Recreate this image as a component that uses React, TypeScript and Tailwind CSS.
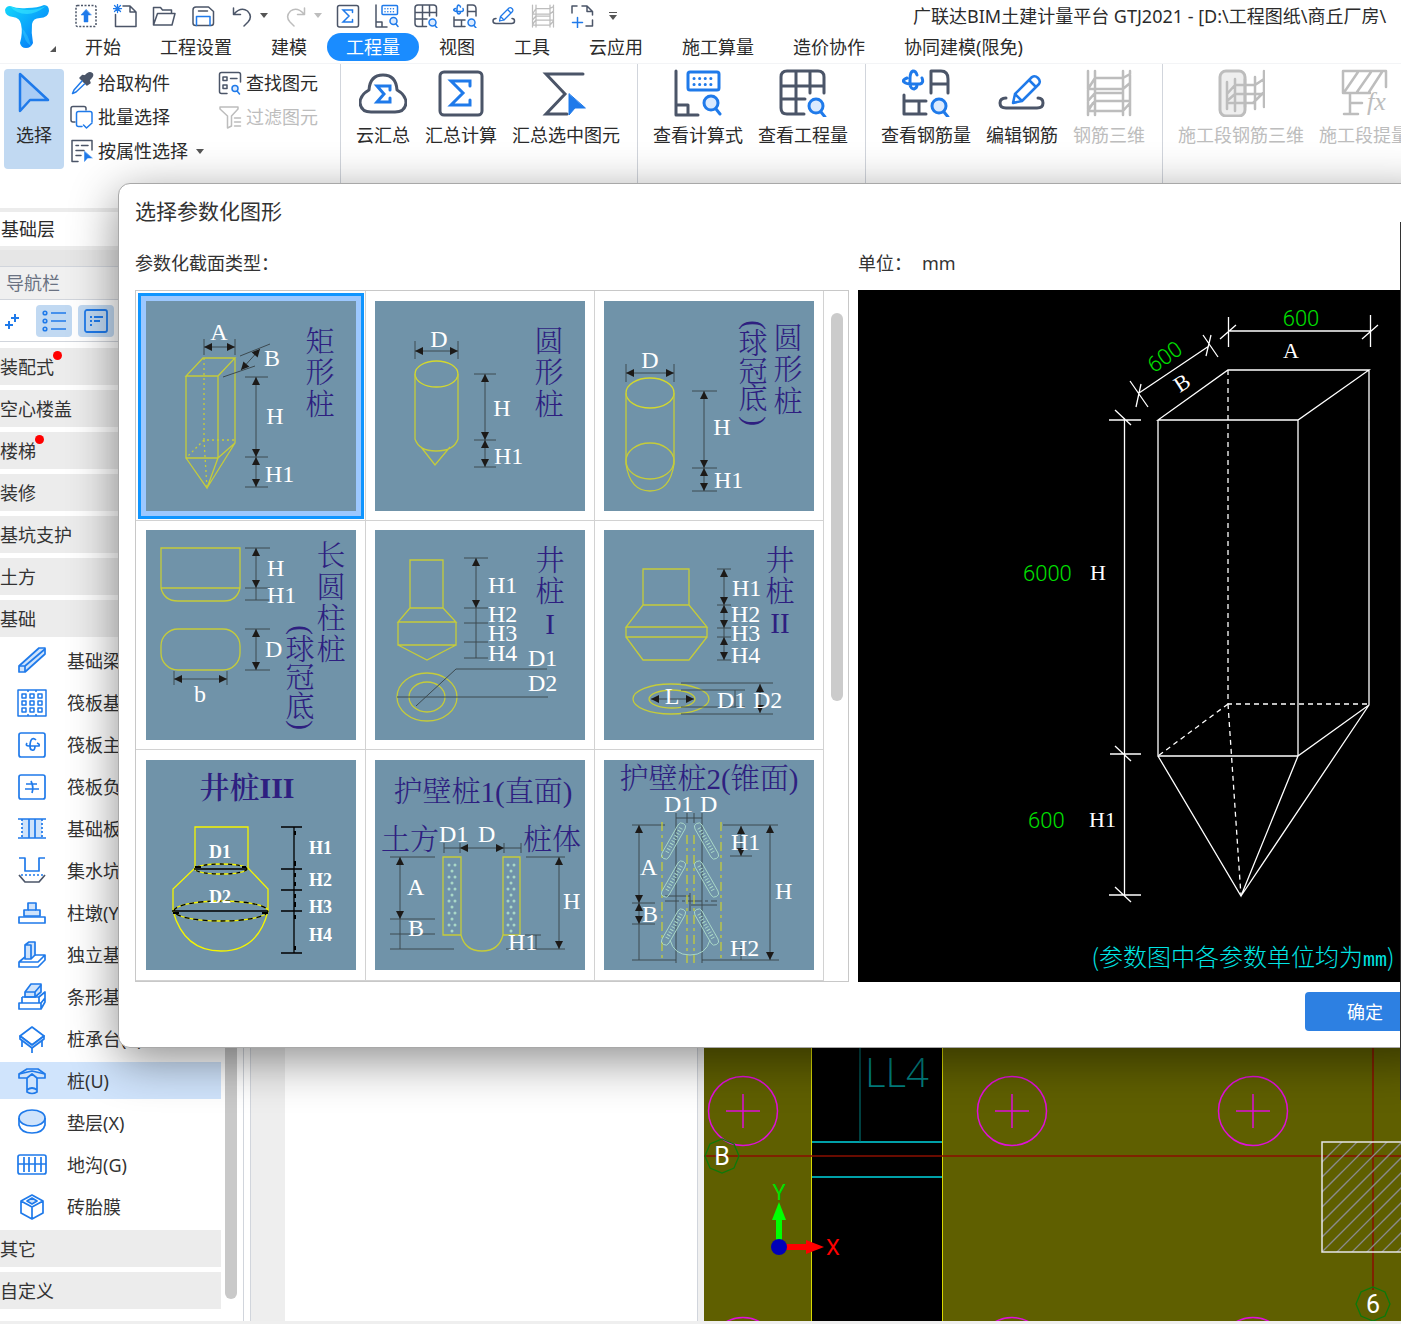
import React, { useState } from 'react';

const DARK = '#4b5568';
const BLUE = '#1f7aea';
const GRAY = '#bdbdbd';

type IconProps = { size?: string };

const Svg: React.FC<IconProps & { children: React.ReactNode }> = ({ size = 'size-6', children }) => (
  <svg viewBox="0 0 48 48" className={`${size} shrink-0`} fill="none" stroke={DARK} strokeWidth="3" strokeLinecap="round" strokeLinejoin="round">
    {children}
  </svg>
);

const Lens: React.FC<{ x?: number; y?: number; r?: number }> = ({ x = 37, y = 36, r = 7 }) => (
  <g stroke={BLUE}>
    <circle cx={x} cy={y} r={r} fill="#dbeafe" />
    <path d={`M${x + 5} ${y + 6} L${x + 9} ${y + 11}`} />
  </g>
);

/* ---------- toolbar icons ---------- */

const UploadIcon = () => (
  <Svg>
    <rect x="4" y="3" width="40" height="42" rx="3" strokeDasharray="4 3" strokeWidth="3" strokeLinecap="butt" />
    <path d="M24 11 L14 22 H20 V36 H28 V22 H34 Z" fill={BLUE} stroke={BLUE} strokeWidth="1" />
  </Svg>
);

const NewIcon = () => (
  <Svg>
    <path d="M20 4 H34 L46 16 V45 H5 V21 M34 4 V16 H46" />
    <path d="M9 1 V17 M1 9 H17 M3 3 L15 15 M15 3 L3 15" stroke={BLUE} strokeWidth="2.5" />
  </Svg>
);

const OpenIcon = () => (
  <Svg>
    <path d="M3 42 V7 H17 L21 12 H39 V19 M3 42 L11 19 H46 L40 42 Z" />
  </Svg>
);

const SaveIcon = () => (
  <Svg>
    <path d="M10 6 H35 L45 15 V38 Q45 43 40 43 H9 Q4 43 4 38 V12 Q4 6 10 6 Z M15 14 H33" />
    <path d="M11 43 V25 H38 V43" stroke={BLUE} />
  </Svg>
);

const UndoIcon: React.FC<{ flip?: boolean }> = ({ flip }) => (
  <Svg>
    <g stroke={flip ? GRAY : DARK} transform={flip ? 'translate(48 0) scale(-1 1)' : undefined}>
      <path d="M7 8 V21 H21 M8 20 Q22 5 35 14 Q46 25 36 36 L28 44" />
    </g>
  </Svg>
);

const SigmaBoxIcon: React.FC<IconProps> = ({ size }) => (
  <Svg size={size}>
    <rect x="3" y="3" width="42" height="43" rx="4" />
    <path d="M33 17 V12 H14 L26 24 L14 36 H33 V31" stroke={BLUE} strokeWidth="3" strokeLinejoin="miter" />
  </Svg>
);

const CalcIcon: React.FC<IconProps> = ({ size }) => (
  <Svg size={size}>
    <path d="M2 2 V46 H24 M2 36 H14 V46" />
    <rect x="14" y="3" width="31" height="18" rx="2" stroke={BLUE} />
    <path d="M20 9.5 H40 M20 15.5 H40" stroke={BLUE} strokeDasharray="0.1 5.5" />
    <Lens y={34} />
  </Svg>
);

const TableIcon: React.FC<IconProps> = ({ size }) => (
  <Svg size={size}>
    <path d="M25 45 H8 Q2 45 2 39 V8 Q2 2 8 2 H39 Q45 2 45 8 V24 M2 17 H45 M2 30 H26 M17 2 V45 M31 2 V24" />
    <Lens y={37} />
  </Svg>
);

const RebarIcon: React.FC<IconProps> = ({ size }) => (
  <Svg size={size}>
    <path d="M15 6 Q14 2 11 2 Q8 3 8 10 V16 Q9 20 12 20 Q15 19 15 16 M5 9 Q0 11 2 13 Q4 15 9 15 H18 Q22 14 20 9" stroke={BLUE} />
    <path d="M29 24 V2 H39 Q46 2 46 10 V24 M29 15 H46 M2 26 V45 H24 M2 32 H24 M17 32 V45" />
    <Lens y={37} />
  </Svg>
);

const EditIcon: React.FC<IconProps> = ({ size }) => (
  <Svg size={size}>
    <path d="M8 29 Q2 29 2 34 Q2 39 8 39 H39 Q45 39 45 34 Q45 29 40 29" />
    <path d="M17 25 L34 8 Q37 6 40 9 Q43 12 41 15 L24 32 L15 34 Z M17 25 L24 32 M31 11 L38 18" stroke={BLUE} strokeWidth="2.5" />
  </Svg>
);

const Rebar3dIcon: React.FC<IconProps> = ({ size }) => (
  <Svg size={size}>
    <g stroke={GRAY} strokeWidth="2.5">
      <path d="M3 2 V46 M10 2 V46 M38 2 V46 M45 2 V46 M10 9 H38 L45 5 M3 20 L10 9 M3 20 H38 L45 14 M3 32 L10 24 H38 M3 40 L10 32 H45 M38 42 H3 L8 34 M38 42 L45 34" />
    </g>
  </Svg>
);

const CaptureIcon = () => (
  <Svg>
    <path d="M4 18 V4 H14 M24 4 H34 L45 15 V22 M34 4 V15 H45 M45 32 V44 H32" />
    <path d="M15 27 V47 M5 37 H25" stroke={BLUE} />
  </Svg>
);

const CloudSigmaIcon: React.FC<IconProps> = ({ size }) => (
  <Svg size={size}>
    <path d="M10 21 Q11 6 24 6 Q37 6 38 21 Q47 26 47 34 Q46 43 36 43 H12 Q2 43 1 34 Q1 26 10 21 Z" />
    <path d="M31 21 V17 H18 L25 25 L18 33 H31 V29" stroke={BLUE} strokeWidth="3" strokeLinejoin="miter" />
  </Svg>
);

const SigmaPickIcon: React.FC<IconProps> = ({ size }) => (
  <Svg size={size}>
    <path d="M41 5 H4 L23 25 L4 45 H25" strokeLinejoin="miter" />
    <path d="M27 25 V46 L33 39 H43 Z" fill={BLUE} stroke={BLUE} strokeWidth="1" />
  </Svg>
);

const SegmentIcon: React.FC<IconProps> = ({ size }) => (
  <Svg size={size}>
    <g stroke={GRAY}>
      <rect x="3" y="2" width="25" height="45" rx="6" fill="#eeeeee" />
      <path d="M10 13 V40 M18 10 V42 M28 10 V38 M38 8 V40 M47 2 V38 M10 25 L18 16 H38 L47 10 M10 32 L18 25 H47 M10 34 H36 L46 24" strokeWidth="2.5" />
    </g>
  </Svg>
);

const FxIcon: React.FC<IconProps> = ({ size }) => (
  <Svg size={size}>
    <g stroke={GRAY}>
      <path d="M46 18 V2 H3 V24 H30 M5 22 L18 3 M17 23 L31 3 M29 23 L42 3 M10 24 V45 M10 34 H22 M4 45 H18" strokeWidth="2.5" />
    </g>
    <text x="27" y="41" fontSize="26" fontStyle="italic" fontFamily="Liberation Serif, serif" fill={GRAY} stroke="none">fx</text>
  </Svg>
);

const DropperIcon = () => (
  <Svg>
    <path d="M30 10 Q38 0 44 5 Q48 10 38 18 L40 24 L34 28 L20 14 L25 9 Z" fill={DARK} />
    <path d="M24 20 L8 38 L5 45 L12 42 L29 26" stroke={BLUE} />
  </Svg>
);

const BatchIcon = () => (
  <Svg>
    <path d="M10 34 H6 Q2 34 2 30 V7 Q2 3 6 3 H28 Q32 3 32 7 V10" />
    <path d="M24 43 H17 Q13 43 13 39 V17 Q13 13 17 13 H40 Q44 13 44 17 V34 M27 40 L33 46 L44 36" stroke={BLUE} />
  </Svg>
);

const PropertyIcon = () => (
  <Svg>
    <path d="M16 45 H4 V3 H44 V22 M12 13 H17 M23 13 H36 M12 23 H28 M12 33 H22" />
    <path d="M29 25 V45 L35 38 H44 Z" fill={BLUE} stroke={BLUE} strokeWidth="1" />
  </Svg>
);

const FindIcon = () => (
  <Svg>
    <path d="M18 45 H7 Q3 45 3 41 V7 Q3 3 7 3 H41 Q45 3 45 7 V22 M10 12 H18 V19 H10 Z M25 15 H38 M10 28 H18 V35 H10 Z" />
    <Lens x={34} y={35} r={6} />
  </Svg>
);

const FilterIcon = () => (
  <Svg>
    <path d="M4 4 H40 V8 L27 22 V42 L19 46 V22 L4 8 Z M33 26 H45 M33 34 H45 M33 42 H45" stroke={GRAY} />
  </Svg>
);

const Caret: React.FC<{ light?: boolean }> = ({ light }) => (
  <svg viewBox="0 0 8 5" className="h-[5px] w-2 shrink-0">
    <path d="M0 0 H8 L4 5 Z" fill={light ? GRAY : '#555555'} />
  </svg>
);

/* ---------- navigation icons ---------- */

const navShapes: Record<string, React.ReactNode> = {
  beam: <><path d="M2 20 L22 2 H28 V8 L8 26 H2 Z" fill="#cfe3fb" /><path d="M2 20 H8 V26 M8 20 L28 3" /></>,
  raft: <path d="M1 2 H29 V28 H1 Z M5 6 H9 V10 H5 Z M13 6 H17 V10 H13 Z M21 6 H25 V10 H21 Z M5 13 H9 V17 H5 Z M13 13 H17 V17 H13 Z M21 13 H25 V17 H21 Z M5 20 H9 V24 H5 Z M13 20 H17 V24 H13 Z M21 20 H25 V24 H21 Z M11 2 V4 M19 2 V4 M11 26 V28 M19 26 V28" strokeWidth="1.5" />,
  main: <><rect x="2" y="3" width="26" height="24" rx="2" /><path d="M19 10 Q17 8 15 9 Q13 11 13 16 Q13 20 15 20 Q18 21 18 16 M10 13 Q8 16 12 16 H22 Q23 14 20 13" /></>,
  neg: <><rect x="2" y="3" width="26" height="24" rx="2" /><path d="M9 12 H20 M8 17 H22 M14 9 Q17 15 15 21" /></>,
  strip: <><path d="M5 5 H25 V24 H5 Z" fill="#cfe3fb" stroke="none" /><path d="M1 5 H29 M1 24 H29 M12 5 V24 M18 5 V24" /><path d="M5 5 V24 M25 5 V24" strokeDasharray="2 2" /></>,
  pit: <><path d="M2 2 H8 V15 H22 V2 H28" /><path d="M4 19 H27" strokeDasharray="2 2" /><path d="M2 19 L8 26 H22 L28 19" stroke={DARK} /></>,
  pier: <><path d="M11 5 H19 V12 H23 V18 H7 V12 H11 Z" fill="#cfe3fb" /><path d="M2 19 H28 V25 H2 Z M11 12 H19" /></>,
  single: <><path d="M8 5 L12 2 H18 V15 L14 19 H8 Z M8 5 H14 V19" fill="#cfe3fb" /><path d="M2 22 L8 17 M18 15 H28 L21 22 H2 V27 H21 L28 20 V15" /></>,
  stripf: <><path d="M8 10 L14 2 H24 V10 L18 15 H8 Z" fill="#cfe3fb" /><path d="M8 10 H18 L24 3 M18 10 V15 M5 15 H22 V21 M5 15 V21 M2 21 H24 V27 H2 Z M24 21 L28 16 V20 L24 27 M22 15 L28 10 V16" /></>,
  cap: <><path d="M3 12 L15 3 L27 12 L15 21 Z" /><path d="M3 12 L15 21 L27 12 V15 L15 24 L3 15 Z" fill="#cfe3fb" /><path d="M5 17 V23 M15 24 V29 M25 17 V23" /></>,
  pile: <><path d="M2 8 L10 3 H21 L28 8 V12 H20 L15 8 L10 12 H2 Z" fill="#cfe3fb" /><path d="M2 8 L15 5 L28 8 M10 12 V26 Q15 29 20 26 V12 M10 24 Q15 20 20 24" /></>,
  cushion: <><ellipse cx="15" cy="10" rx="13" ry="8" fill="#cfe3fb" /><path d="M2 10 V17 Q4 25 15 25 Q26 25 28 17 V10" /></>,
  trench: <><rect x="1" y="5" width="28" height="19" rx="2" /><path d="M7 7 V22 M12 7 V22 M18 7 V22 M24 7 V22 M1 14 H29" /></>,
  brick: <><path d="M4 9 L15 3 L26 9 V21 L15 27 L4 21 Z M4 9 L15 15 L26 9 M15 15 V27" /><path d="M10 9 L15 6 L20 9 L15 12 Z" fill="#cfe3fb" /></>,
};

/* ---------- helpers for the section drawings ---------- */

const Text: React.FC<{ x: number; y: number; children: string; mid?: boolean; bold?: boolean }> = ({ x, y, children, mid, bold }) => (
  <text x={x} y={y} fill="#ffffff" fontSize={bold ? 18 : 24} fontWeight={bold ? 700 : 400} textAnchor={mid ? 'middle' : 'start'} fontFamily="Liberation Serif, serif">
    {children}
  </text>
);

const CJK = '"Liberation Serif", "Noto Serif CJK SC", "Noto Sans CJK SC", serif';

const Title: React.FC<{ x: number; y: number; children: string; size?: number; weight?: number }> = ({ x, y, children, size = 29, weight = 300 }) => (
  <text x={x} y={y} fill="#2e1f80" fontSize={size} fontWeight={weight} textAnchor="middle" fontFamily={CJK}>
    {children}
  </text>
);

// One glyph per entry: [character, centre y]. Brackets lie on their side.
const Column: React.FC<{ x: number; items: [string, number][] }> = ({ x, items }) => (
  <g fill="#2e1f80" fontSize="29" fontWeight="300" textAnchor="middle" fontFamily={CJK}>
    {items.map(([char, y]) =>
      char === '(' || char === ')' ? (
        <text key={char} transform={`translate(${x} ${y}) rotate(90)`} y="8">{char}</text>
      ) : (
        <text key={char} x={x} y={y + 10}>{char}</text>
      ),
    )}
  </g>
);

const Arrow: React.FC<{ x1: number; y1: number; x2: number; y2: number }> = ({ x1, y1, x2, y2 }) => {
  const angle = (Math.atan2(y2 - y1, x2 - x1) * 180) / Math.PI;
  return (
    <g fill="#1c1a18" stroke="none">
      <line x1={x1} y1={y1} x2={x2} y2={y2} stroke="#3d4a50" />
      <path d="M0 0 L8 -4 V4 Z" transform={`translate(${x1} ${y1}) rotate(${angle})`} />
      <path d="M0 0 L8 -4 V4 Z" transform={`translate(${x2} ${y2}) rotate(${angle + 180})`} />
    </g>
  );
};

const Lines: React.FC<{ d: string }> = ({ d }) => <path d={d} stroke="#3d4a50" fill="none" />;
const Shape: React.FC<{ d: string; dash?: string; bright?: boolean }> = ({ d, dash, bright }) => (
  <path d={d} stroke={bright ? '#f5f500' : '#c5cc3a'} strokeWidth="1.3" strokeDasharray={dash} fill="none" />
);

const dots = (x: number) =>
  Array.from({ length: 12 }, (_, i) => (
    <g key={i} fill="#a9d8c8">
      {i % 2 === 0 ? (
        <>
          <circle cx={x - 3} cy={105 + i * 6} r="1.5" />
          <circle cx={x + 3} cy={105 + i * 6} r="1.5" />
        </>
      ) : (
        <circle cx={x} cy={105 + i * 6} r="1.5" />
      )}
    </g>
  ));

const sections = [
  {
    name: '矩形桩',
    drawing: (
      <>
        <Shape d="M57 57 H89 L72 75 H40 Z M40 75 V157 H72 V75 M89 57 V142 L72 157 L61 187 L40 157 M61 187 L89 142" />
        <Shape d="M58 57 V139 H89 M58 139 L40 157 M58 139 L61 187" dash="2 3" />
        <Lines d="M58 38 V54 M89 38 V54 M94 55 L124 43 M77 76 L109 65 M99 76 H122 M99 156 H122 M99 186 H122" />
        <Arrow x1={58} y1={46} x2={89} y2={46} />
        <Arrow x1={95} y1={69} x2={114} y2={48} />
        <Arrow x1={110} y1={76} x2={110} y2={156} />
        <Arrow x1={110} y1={156} x2={110} y2={186} />
        <Text x={73} y={39} mid>A</Text>
        <Text x={126} y={65} mid>B</Text>
        <Text x={129} y={123} mid>H</Text>
        <Text x={119} y={181}>H1</Text>
        <Column x={174} items={[['矩', 41], ['形', 72], ['桩', 104]]} />
      </>
    ),
  },
  {
    name: '圆形桩',
    drawing: (
      <>
        <ellipse cx="61.5" cy="73" rx="21.5" ry="13" stroke="#d3d82e" strokeWidth="1.3" fill="none" />
        <Shape d="M40 73 V138 Q44 150 61 150 Q79 150 83 138 V73 M46 146 L60 164 L75 146" />
        <Lines d="M40 40 V58 M83 40 V58 M99 73 H121 M99 139 H121 M99 166 H121" />
        <Arrow x1={40} y1={50} x2={83} y2={50} />
        <Arrow x1={110} y1={73} x2={110} y2={139} />
        <Arrow x1={110} y1={139} x2={110} y2={166} />
        <Text x={64} y={46} mid>D</Text>
        <Text x={127} y={115} mid>H</Text>
        <Text x={119} y={163}>H1</Text>
        <Column x={174} items={[['圆', 41], ['形', 72], ['桩', 104]]} />
      </>
    ),
  },
  {
    name: '圆形桩(球冠底)',
    drawing: (
      <>
        <ellipse cx="46" cy="92" rx="24" ry="15" stroke="#d3d82e" strokeWidth="1.3" fill="none" />
        <ellipse cx="46" cy="160" rx="24" ry="18" stroke="#c5cc3a" strokeWidth="1.3" fill="none" />
        <Shape d="M22 92 V163 Q26 190 46 190 Q66 190 70 163 V92" />
        <Lines d="M22 63 V81 M70 63 V81 M88 90 H113 M88 167 H113 M88 190 H113" />
        <Arrow x1={22} y1={72} x2={70} y2={72} />
        <Arrow x1={100} y1={90} x2={100} y2={167} />
        <Arrow x1={100} y1={167} x2={100} y2={190} />
        <Text x={46} y={67} mid>D</Text>
        <Text x={118} y={134} mid>H</Text>
        <Text x={110} y={187}>H1</Text>
        <Column x={184} items={[['圆', 38], ['形', 69], ['桩', 101]]} />
        <Column x={149} items={[['(', 24], ['球', 43], ['冠', 71], ['底', 98], [')', 120]]} />
      </>
    ),
  },
  {
    name: '长圆柱桩(球冠底)',
    drawing: (
      <>
        <Shape d="M15 18 H94 V58 H15 Z M15 58 Q18 71 32 71 H78 Q91 71 94 58" />
        <rect x="15" y="99" width="79" height="41" rx="17" stroke="#c5cc3a" strokeWidth="1.3" fill="none" />
        <Lines d="M99 18 H124 M99 58 H124 M99 70 H124 M110 58 V70 M99 99 H124 M99 140 H124 M28 141 V155 M81 141 V155" />
        <Arrow x1={110} y1={18} x2={110} y2={58} />
        <Arrow x1={110} y1={99} x2={110} y2={140} />
        <Arrow x1={28} y1={149} x2={81} y2={149} />
        <Text x={121} y={46}>H</Text>
        <Text x={121} y={73}>H1</Text>
        <Text x={119} y={127}>D</Text>
        <Text x={54} y={172} mid>b</Text>
        <Column x={185} items={[['长', 26], ['圆', 58], ['柱', 89], ['桩', 120]]} />
        <Column x={154} items={[['(', 100], ['球', 120], ['冠', 148], ['底', 177], [')', 195]]} />
      </>
    ),
  },
  {
    name: '井桩I',
    drawing: (
      <>
        <Shape d="M35 30 H68 V78 H35 Z M35 78 L23 92 H81 L68 78 M23 92 V115 H81 V92 M23 115 L52 130 L81 115" />
        <ellipse cx="52" cy="167" rx="30" ry="24" stroke="#c5cc3a" strokeWidth="1.3" fill="none" />
        <ellipse cx="52" cy="167" rx="18" ry="15" stroke="#c5cc3a" strokeWidth="1.3" fill="none" />
        <Lines d="M89 28 H113 M89 78 H113 M89 93 H113 M89 112 H113 M89 128 H113 M101 78 V128 M41 176 L81 139 H172 M22 167 H173" />
        <Arrow x1={101} y1={28} x2={101} y2={78} />
        <Text x={113} y={63}>H1</Text>
        <Text x={113} y={92}>H2</Text>
        <Text x={113} y={111}>H3</Text>
        <Text x={113} y={131}>H4</Text>
        <Text x={153} y={136}>D1</Text>
        <Text x={153} y={161}>D2</Text>
        <Column x={175} items={[['井', 31], ['桩', 62], ['I', 94]]} />
      </>
    ),
  },
  {
    name: '井桩II',
    drawing: (
      <>
        <Shape d="M39 39 H85 V75 H39 Z M39 75 L22 97 H103 L85 75 M22 97 V107 H103 V97 M22 107 L39 130 H85 L103 107" />
        <ellipse cx="67" cy="169" rx="38" ry="15" stroke="#c5cc3a" strokeWidth="1.3" fill="none" />
        <ellipse cx="68" cy="169" rx="23" ry="9" stroke="#c5cc3a" strokeWidth="1.3" fill="none" />
        <Lines d="M113 39 H127 M113 75 H127 M113 98 H127 M113 107 H127 M113 130 H127 M120 98 V107 M77 153 H169 M77 160 H141 M77 177 H141 M77 184 H169 M131 160 V177" />
        <Arrow x1={120} y1={39} x2={120} y2={75} />
        <Arrow x1={120} y1={75} x2={120} y2={98} />
        <Arrow x1={120} y1={107} x2={120} y2={130} />
        <Arrow x1={47} y1={169} x2={90} y2={169} />
        <Arrow x1={156} y1={154} x2={156} y2={183} />
        <Text x={128} y={66}>H1</Text>
        <Text x={127} y={92}>H2</Text>
        <Text x={127} y={111}>H3</Text>
        <Text x={127} y={133}>H4</Text>
        <Text x={68} y={174} mid>L</Text>
        <Text x={113} y={178}>D1</Text>
        <Text x={149} y={178}>D2</Text>
        <Column x={176} items={[['井', 31], ['桩', 62], ['II', 93]]} />
      </>
    ),
  },
  {
    name: '井桩III',
    drawing: (
      <>
        <Title x={101} y={38} size={30} weight={600}>井桩III</Title>
        <Shape bright d="M49 108 V67 H102 V108 L122 129 V151 Q112 191 75 191 Q38 191 27 151 V129 L49 108" />
        <g fill="none" strokeWidth="1.3">
          <ellipse cx="75" cy="109" rx="26" ry="5" stroke="#f5f500" />
          <ellipse cx="75" cy="109" rx="26" ry="5" stroke="#000000" strokeDasharray="4 4" />
          <ellipse cx="75" cy="151" rx="47" ry="10" stroke="#f5f500" />
          <ellipse cx="75" cy="151" rx="47" ry="10" stroke="#000000" strokeDasharray="5 4" />
          <path d="M48 109 H101 M26 151 H122 M148 67 V193 M135 67 H156 M135 109 H156 M135 130 H156 M135 151 H156 M135 193 H156" stroke="#000000" />
          <path d="M49 107 H55 M96 107 H100 M27 153 H33 M116 153 H122 M149 71 V75 M149 101 V106 M149 113 V117 M149 122 V126 M149 134 V138 M149 142 V147 M149 155 V159 M149 186 V190" stroke="#000000" strokeWidth="2" />
        </g>
        <Text x={74} y={98} mid bold>D1</Text>
        <Text x={74} y={143} mid bold>D2</Text>
        <Text x={163} y={94} bold>H1</Text>
        <Text x={163} y={126} bold>H2</Text>
        <Text x={163} y={153} bold>H3</Text>
        <Text x={163} y={181} bold>H4</Text>
      </>
    ),
  },
  {
    name: '护壁桩1(直面)',
    drawing: (
      <>
        <Title x={108} y={42}>护壁桩1(直面)</Title>
        <Title x={35} y={90}>土方</Title>
        <Title x={177} y={90}>桩体</Title>
        <Shape d="M68 97 H86 V175 H68 Z M128 97 H145 V175 H128 Z M86 175 Q90 191 107 191 Q124 191 128 175" />
        {dots(77)}
        {dots(136)}
        <Lines d="M69 83 V93 M85 83 V93 M129 83 V93 M146 83 V93 M69 88 H85 M129 88 H146 M15 97 H60 M15 159 H60 M15 174 H60 M15 189 H79 M25 159 V189 M151 97 H190 M131 189 H190 M150 175 H166 M161 175 V189" />
        <Arrow x1={85} y1={88} x2={129} y2={88} />
        <Arrow x1={25} y1={97} x2={25} y2={159} />
        <Arrow x1={184} y1={97} x2={184} y2={189} />
        <Text x={64} y={82}>D1</Text>
        <Text x={103} y={82}>D</Text>
        <Text x={32} y={135}>A</Text>
        <Text x={33} y={176}>B</Text>
        <Text x={188} y={149}>H</Text>
        <Text x={133} y={190}>H1</Text>
      </>
    ),
  },
  {
    name: '护壁桩2(锥面)',
    drawing: (
      <>
        <Title x={105} y={29}>护壁桩2(锥面)</Title>
        <Lines d="M72 53 V203 M98 53 V203 M83 53 V63 M90 53 V63 M72 58 H98 M28 65 H61 M28 143 H51 M28 164 H51 M28 200 H72 M35 164 V200 M119 65 H174 M98 200 H175 M126 96 H148 M137 186 V200 M61 136 H86 M87 145 H113 M86 133 V151" />
        <path d="M61 141 H113" stroke="#3d4a50" strokeDasharray="14 3 3 3" />
        <Shape d="M58 62 V200 M117 62 V200 M83 75 V203 M90 75 V203" dash="9 4 3 4" />
        {[0, 38, 86].map((dy) => (
          <g key={dy} transform={`translate(0 ${dy})`} stroke="#a9d8c8" fill="none">
            <path d="M74 65 A4 4 0 0 1 81 69 L65 97 A4 4 0 0 1 58 93 Z M98 65 A4 4 0 0 0 91 69 L107 97 A4 4 0 0 0 114 93 Z" />
            <path d="M77 68 L62 94 M95 68 L110 94" strokeWidth="4" strokeDasharray="1 2" />
          </g>
        ))}
        <path d="M66 180 Q70 195 86 195 Q102 195 106 180" stroke="#a9d8c8" fill="none" />
        <Arrow x1={35} y1={65} x2={35} y2={143} />
        <Arrow x1={35} y1={143} x2={35} y2={164} />
        <Arrow x1={137} y1={66} x2={137} y2={96} />
        <Arrow x1={166} y1={65} x2={166} y2={200} />
        <Text x={60} y={52}>D1</Text>
        <Text x={96} y={52}>D</Text>
        <Text x={36} y={115}>A</Text>
        <Text x={38} y={162}>B</Text>
        <Text x={127} y={90}>H1</Text>
        <Text x={171} y={139}>H</Text>
        <Text x={126} y={196}>H2</Text>
      </>
    ),
  },
];

/* ---------- data ---------- */

const tabs = ['开始', '工程设置', '建模', '工程量', '视图', '工具', '云应用', '施工算量', '造价协作', '协同建模(限免)'];

const groups = [
  {
    label: '汇总',
    width: 'w-[297px]',
    items: [
      { label: '云汇总', icon: CloudSigmaIcon },
      { label: '汇总计算', icon: SigmaBoxIcon },
      { label: '汇总选中图元', icon: SigmaPickIcon },
    ],
  },
  {
    label: '土建计算结果',
    width: 'w-[228px]',
    items: [
      { label: '查看计算式', icon: CalcIcon },
      { label: '查看工程量', icon: TableIcon },
    ],
  },
  {
    label: '钢筋计算结果',
    width: 'w-[297px]',
    items: [
      { label: '查看钢筋量', icon: RebarIcon },
      { label: '编辑钢筋', icon: EditIcon },
      { label: '钢筋三维', icon: Rebar3dIcon, disabled: true },
    ],
  },
  {
    label: '施工段计算结果',
    width: 'w-[420px]',
    items: [
      { label: '施工段钢筋三维', icon: SegmentIcon, disabled: true },
      { label: '施工段提量', icon: FxIcon, disabled: true },
    ],
  },
];

const categories = [
  { label: '装配式', dot: true },
  { label: '空心楼盖' },
  { label: '楼梯', dot: true },
  { label: '装修' },
  { label: '基坑支护' },
  { label: '土方' },
  { label: '基础' },
];

const foundation = [
  { label: '基础梁(F)', icon: 'beam' },
  { label: '筏板基础(M)', icon: 'raft' },
  { label: '筏板主筋(R)', icon: 'main' },
  { label: '筏板负筋(X)', icon: 'neg' },
  { label: '基础板带(W)', icon: 'strip' },
  { label: '集水坑(K)', icon: 'pit' },
  { label: '柱墩(Y)', icon: 'pier' },
  { label: '独立基础(D)', icon: 'single' },
  { label: '条形基础(T)', icon: 'stripf' },
  { label: '桩承台(V)', icon: 'cap' },
  { label: '桩(U)', icon: 'pile' },
  { label: '垫层(X)', icon: 'cushion' },
  { label: '地沟(G)', icon: 'trench' },
  { label: '砖胎膜', icon: 'brick' },
];

/* ---------- page parts ---------- */

const QuickButton: React.FC<{ label: string; children: React.ReactNode }> = ({ label, children }) => (
  <button aria-label={label} className="flex w-[39px] justify-center">{children}</button>
);

const Header = () => (
  <header className="flex h-16 shrink-0 border-b border-gray-100">
    <button aria-label="应用菜单" className="flex w-[66px] shrink-0">
      <svg viewBox="0 0 66 62" className="h-[62px] w-[66px]">
        <defs>
          <linearGradient id="logo" x1="0" y1="0" x2="1" y2="1">
            <stop offset="0" stopColor="#14d8fb" />
            <stop offset="0.5" stopColor="#0aa5fb" />
            <stop offset="1" stopColor="#0869f5" />
          </linearGradient>
        </defs>
        <path d="M10 6 Q18 9 27 8 Q38 8 44 5 Q49 5 49 11 Q48 18 40 18 Q33 18 32 24 Q31 33 33 43 Q31 48 26 48 Q21 48 20 43 Q23 33 21 24 Q20 18 13 17 Q5 16 5 10 Q6 6 10 6 Z" fill="url(#logo)" />
        <path d="M10 6 Q28 14 46 6 Q36 14 27 14 Q16 14 10 6 Z" fill="#3be6ff" opacity="0.6" />
        <path d="M22 28 Q28 34 31 46 Q24 42 22 28 Z" fill="#35c8ff" opacity="0.5" />
        <path d="M56 46 V52 H50 Z" fill="#555555" />
      </svg>
    </button>
    <div className="min-w-0 flex-1">
      <div className="flex h-[31px] items-center">
        <QuickButton label="上传"><UploadIcon /></QuickButton>
        <QuickButton label="新建"><NewIcon /></QuickButton>
        <QuickButton label="打开"><OpenIcon /></QuickButton>
        <QuickButton label="保存"><SaveIcon /></QuickButton>
        <button aria-label="撤销" className="flex w-[54px] items-center gap-1.5 pl-2"><UndoIcon /><Caret /></button>
        <button aria-label="恢复" className="flex w-[52px] items-center gap-1.5 pl-2"><UndoIcon flip /><Caret light /></button>
        <QuickButton label="汇总计算"><SigmaBoxIcon /></QuickButton>
        <QuickButton label="查看计算式"><CalcIcon /></QuickButton>
        <QuickButton label="查看工程量"><TableIcon /></QuickButton>
        <QuickButton label="查看钢筋量"><RebarIcon /></QuickButton>
        <QuickButton label="编辑钢筋"><EditIcon /></QuickButton>
        <QuickButton label="钢筋三维"><Rebar3dIcon /></QuickButton>
        <QuickButton label="截图"><CaptureIcon /></QuickButton>
        <button aria-label="更多" className="flex w-6 flex-col items-center gap-0.5">
          <span className="h-px w-2 bg-[#555]" />
          <Caret />
        </button>
        <h1 className="ml-auto w-[488px] overflow-hidden whitespace-nowrap text-lg">
          广联达BIM土建计量平台 GTJ2021 - [D:\工程图纸\商丘厂房\
        </h1>
      </div>
      <nav className="flex h-8 items-center gap-px">
        {tabs.map((tab) => (
          <button
            key={tab}
            className={`h-7 whitespace-nowrap rounded-full px-[19px] text-lg leading-7 ${
              tab === '工程量' ? 'bg-[#1a8cff] text-white' : ''
            }`}
          >
            {tab}
          </button>
        ))}
      </nav>
    </div>
  </header>
);

const SmallTool: React.FC<{ icon: React.FC; label: string; disabled?: boolean; caret?: boolean }> = ({ icon: Icon, label, disabled, caret }) => (
  <button disabled={disabled} className={`flex h-[34px] items-center gap-1 whitespace-nowrap ${disabled ? 'text-[#bdbdbd]' : ''}`}>
    <Icon />
    {label}
    {caret && <span className="ml-1"><Caret /></span>}
  </button>
);

const Ribbon = () => (
  <div className="flex h-36 shrink-0 overflow-hidden text-lg leading-6">
    <section className="flex w-[341px] shrink-0 flex-col justify-between border-r border-gray-300 pb-1 pl-1">
      <div className="flex items-start">
        <button className="mt-[5px] flex h-[100px] w-[60px] flex-col items-center rounded bg-[#c1d9f2]">
          <svg viewBox="0 0 48 48" className="size-12" fill="#a9ccf5" stroke={BLUE} strokeWidth="2.5" strokeLinejoin="round">
            <path d="M10 5 V42 L20 31 H38 Z" />
          </svg>
          <span className="mt-1.5">选择</span>
        </button>
        <div className="ml-1.5 flex w-[148px] flex-col pt-0.5">
          <SmallTool icon={DropperIcon} label="拾取构件" />
          <SmallTool icon={BatchIcon} label="批量选择" />
          <SmallTool icon={PropertyIcon} label="按属性选择" caret />
        </div>
        <div className="flex flex-col pt-0.5">
          <SmallTool icon={FindIcon} label="查找图元" />
          <SmallTool icon={FilterIcon} label="过滤图元" disabled />
        </div>
      </div>
      <p className="text-center">选择</p>
    </section>
    {groups.map((group) => (
      <section key={group.label} className={`${group.width} flex shrink-0 flex-col justify-between border-r border-gray-300 pb-1`}>
        <div className="flex gap-[15px] pl-[15px] pt-[5px]">
          {group.items.map(({ label, icon: Icon, disabled }: any) => (
            <button key={label} disabled={disabled} className={`flex flex-col items-center gap-1.5 whitespace-nowrap ${disabled ? 'text-[#bdbdbd]' : ''}`}>
              <Icon size="size-12" />
              {label}
            </button>
          ))}
        </div>
        <p className="text-center">{group.label}</p>
      </section>
    ))}
  </div>
);

const CategoryRow: React.FC<{ label: string; dot?: boolean }> = ({ label, dot }) => (
  <button className="flex h-[37px] shrink-0 items-center bg-[#ececec] text-left">
    <span className="relative">
      {label}
      {dot && <i className="absolute -right-2 -top-1 size-[9px] rounded-full bg-[#ff0000]" />}
    </span>
  </button>
);

const Sidebar = () => (
  <aside className="flex w-[244px] shrink-0 flex-col border-r border-gray-300 text-lg leading-6 text-[#333]">
    <h2 className="flex h-[34px] shrink-0 items-center border-y border-gray-300 bg-[#f0f0f0] pl-1.5 text-gray-500">导航栏</h2>
    <div className="flex h-[42px] shrink-0 items-center gap-1.5 border-b border-gray-300">
      <button aria-label="添加" className="mr-2.5 w-5">
        <svg viewBox="0 0 20 24" className="h-6 w-5" stroke={BLUE} strokeWidth="2">
          <path d="M15 5 V13 M11 9 H19 M9 12 V20 M5 16 H13" />
        </svg>
      </button>
      <button aria-label="列表" className="flex h-8 w-9 items-center justify-center rounded bg-[#c1d9f2]">
        <svg viewBox="0 0 24 24" className="size-6" fill="none" stroke={BLUE} strokeWidth="1.6">
          <path d="M9 4 H24 M9 12 H24 M9 20 H24" />
          <circle cx="3" cy="4" r="1.8" />
          <circle cx="3" cy="12" r="1.8" />
          <circle cx="3" cy="20" r="1.8" />
        </svg>
      </button>
      <button aria-label="详情" className="flex h-8 w-9 items-center justify-center rounded bg-[#c1d9f2]">
        <svg viewBox="0 0 24 24" className="size-6" fill="none" stroke={BLUE} strokeWidth="1.8">
          <rect x="1" y="1" width="22" height="22" rx="2" />
          <path d="M6 8 H8 M10 8 H19 M6 12 H8 M10 12 H16 M6 16 H8" />
        </svg>
      </button>
    </div>
    <div className="flex min-h-0 flex-1 gap-1 overflow-hidden pt-1.5">
      <div className="flex w-[221px] flex-col gap-[5px]">
        {categories.map((item) => <CategoryRow key={item.label} {...item} />)}
        {foundation.map((item) => (
          <button
            key={item.label}
            className={`flex h-[37px] shrink-0 items-center gap-5 whitespace-nowrap pl-[17px] ${item.icon === 'pile' ? 'bg-[#d0e4fc]' : ''}`}
          >
            <svg viewBox="0 0 30 30" className="size-[30px] shrink-0" fill="none" stroke={BLUE} strokeWidth="1.7" strokeLinejoin="round">
              {navShapes[item.icon]}
            </svg>
            {item.label}
          </button>
        ))}
        <CategoryRow label="其它" />
        <CategoryRow label="自定义" />
      </div>
      <div className="mb-[22px] w-3 rounded-full bg-[#c9c9c9]" />
    </div>
  </aside>
);

const octagon = 'M-17 0 L-12 -12 L0 -17 L12 -12 L17 0 L12 12 L0 17 L-12 12 Z';

const Canvas = () => (
  <main className="flex min-w-0 flex-1 items-end overflow-hidden bg-[#5f5f00]">
    <svg viewBox="0 0 697 281" className="h-[281px] w-[697px] shrink-0" fill="none">
      <rect x="108" y="0" width="130" height="281" fill="#000000" />
      <path d="M107.5 0 V281 M238.5 0 V281" stroke="#d8d800" />
      <path d="M0 116 H697 M669 0 V250" stroke="#8b0f00" strokeWidth="1.5" />
      <path d="M108 102 H238 M108 137 H238" stroke="#00d5e0" strokeWidth="1.5" />
      <path d="M156 8 V102" stroke="#008080" />
      <text x="161" y="47" fontSize="40" fontWeight="300" fontFamily="Open Sans, Roboto, sans-serif" fill="#007f7f">LL4</text>
      <g stroke="#e010d8" strokeWidth="1.5">
        {[39, 308, 549].map((x) => (
          <g key={x}>
            <circle cx={x} cy="71" r="34.5" />
            <path d={`M${x - 17} 71 H${x + 17} M${x} 54 V88`} />
            <circle cx={x} cy="312" r="34.5" />
          </g>
        ))}
      </g>
      <path d={octagon} transform="translate(18 116)" stroke="#0b7a0b" strokeWidth="1.3" />
      <path d={octagon} transform="translate(669 264)" stroke="#0b7a0b" strokeWidth="1.3" />
      <g fill="#ffffff" fontSize="25" textAnchor="middle" fontFamily="Roboto, sans-serif">
        <text x="18" y="125">B</text>
        <text x="669" y="273">6</text>
      </g>
      <path d="M75 200 V178" stroke="#00ff00" strokeWidth="6" />
      <path d="M75 162 L82 180 H68 Z" fill="#00ff00" />
      <path d="M82 207 H103" stroke="#ff0000" strokeWidth="6" />
      <path d="M120 207 L102 200 V214 Z" fill="#ff0000" />
      <circle cx="75" cy="207" r="8" fill="#0000b8" />
      <text x="75" y="160" fontSize="22" textAnchor="middle" fontFamily="Roboto, sans-serif" fill="#00e000">Y</text>
      <text x="129" y="215" fontSize="22" textAnchor="middle" fontFamily="Roboto, sans-serif" fill="#ff0000">X</text>
      <clipPath id="hatch"><rect x="618" y="102" width="90" height="110" /></clipPath>
      <g clipPath="url(#hatch)" stroke="#8a8a8a" strokeWidth="1.3">
        {Array.from({ length: 14 }, (_, i) => (
          <path key={i} d={`M${526 + i * 15} 214 L${640 + i * 15} 100`} />
        ))}
      </g>
      <path d="M697 102 H618 V212 H697" stroke="#e8e8e8" strokeWidth="1.5" />
    </svg>
  </main>
);

const Preview = () => (
  <div className="min-w-0 flex-1 overflow-hidden bg-black">
    <svg viewBox="0 0 543 692" className="h-[692px] w-[543px]" fill="none" stroke="#ffffff" strokeWidth="1.3">
      <path d="M370 80 H511 L440 130 H300 Z M300 130 V466 H440 V130 M511 80 V415 L440 466 L383 606 L300 466 M383 606 L511 415" />
      <path d="M370 80 V414 H511 M370 414 L300 466 M370 414 L383 606" strokeDasharray="5 4" />
      <path d="M370 41 H512 M370.5 27 V57 M512.5 25 V57 M362 49 L378 35 M504 49 L520 35" />
      <path d="M281 103 L351 56 M272 91 L290 117 M283 94 L278 117 M345 45 L360 67 M353 45 L348 66" />
      <path d="M266.5 130 V605 M251 130 H283 M252 464 H283 M251 605 H283 M257 120 L273 135 M257 456 L273 471 M257 597 L273 612" />
      <g stroke="none" fill="#00e000" fontSize="22" fontWeight="300" fontFamily="Roboto, sans-serif">
        <text x="443" y="36" textAnchor="middle">600</text>
        <text transform="translate(311 73) rotate(-35)" textAnchor="middle">600</text>
        <text x="165" y="291">6000</text>
        <text x="170" y="538">600</text>
      </g>
      <g stroke="none" fill="#ffffff" fontSize="22" fontFamily="Liberation Serif, serif">
        <text x="433" y="68" textAnchor="middle">A</text>
        <text transform="translate(328 99) rotate(-33)" textAnchor="middle">B</text>
        <text x="240" y="290" textAnchor="middle">H</text>
        <text x="231" y="537">H1</text>
      </g>
      <text x="385" y="676" textAnchor="middle" stroke="none" fill="#00e5e5" fontSize="24" fontWeight="300" fontFamily={'"Noto Sans CJK SC", sans-serif'}>
        (参数图中各参数单位均为<tspan fontSize="20" fontFamily="Liberation Mono, monospace">mm</tspan>)
      </text>
    </svg>
  </div>
);

const ShapeDialog = () => {
  const [selected, setSelected] = useState(0);
  return (
    <div
      role="dialog"
      aria-labelledby="dialog-title"
      className="absolute -right-10 left-[118px] top-[183px] rounded-xl border border-[#a8a8a8] bg-white pb-4 pl-4 pr-[15px] pt-[11px] text-lg text-[#333] shadow-[0_12px_48px_rgba(0,0,0,0.45)]"
    >
      <h2 id="dialog-title" className="text-[21px] leading-8">选择参数化图形</h2>
      <div className="mt-5 flex gap-[9px]">
        <div className="shrink-0">
          <p className="mb-[11px] leading-8">参数化截面类型：</p>
          <div className="flex w-[714px] border border-[#c8c8c8]">
            <div className="grid grid-cols-[230px_229px_229px] grid-rows-[230px_229px_231px]">
              {sections.map((section, index) => (
                <div key={section.name} className="flex items-center justify-center border-b border-r border-[#d2d2d2]">
                  <button
                    aria-label={section.name}
                    onClick={() => setSelected(index)}
                    className={selected === index ? 'border-[3px] border-[#0f95ff] bg-[#9cc8ff] p-[5px]' : ''}
                  >
                    <svg viewBox="0 0 210 210" className="size-[210px] bg-[#7093a9]">{section.drawing}</svg>
                  </button>
                </div>
              ))}
            </div>
            <div className="ml-[7px] mt-[22px] h-[388px] w-3 rounded-full bg-[#cbcbcb]" />
          </div>
        </div>
        <div className="flex min-w-0 flex-1 flex-col">
          <p className="mb-[11px] leading-8">单位：<span className="ml-2.5">mm</span></p>
          <Preview />
        </div>
      </div>
      <div className="mt-2.5 flex justify-end">
        <button className="h-[39px] w-[120px] rounded bg-[#2d80e2] text-white">确定</button>
      </div>
    </div>
  );
};

const App: React.FC = () => (
  <div className="relative flex h-screen flex-col overflow-hidden bg-white font-['Noto_Sans','Noto_Sans_CJK_SC',sans-serif] text-[#2b2b2b]">
    <Header />
    <Ribbon />
    <div className="flex h-[42px] shrink-0 items-center border-y-4 border-[#ececec]">
      <select aria-label="楼层" className="w-28 appearance-none pl-px text-lg">
        <option>基础层</option>
      </select>
    </div>
    <div className="h-4 shrink-0 bg-[#e6e6e6]" />
    <div className="flex min-h-0 flex-1 border-b-3 border-[#efefef]">
      <Sidebar />
      <div className="ml-1.5 w-[35px] shrink-0 border-l border-gray-300 bg-[#eeeeee]" />
      <div className="w-[413px] shrink-0 border-r border-gray-300" />
      <div className="w-1.5 shrink-0 bg-[#f0f0f0]" />
      <Canvas />
    </div>
    <ShapeDialog />
    <div className="absolute bottom-56 right-0 top-[222px] w-px bg-[#333]" />
  </div>
);

export default App;
